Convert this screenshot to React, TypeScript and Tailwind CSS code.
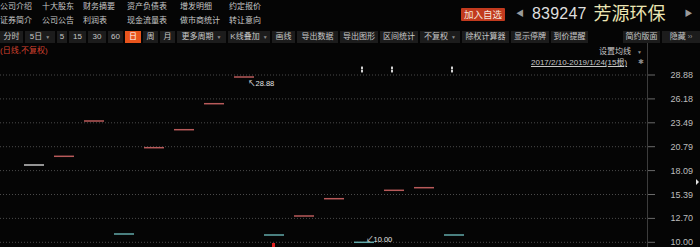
import React from "react";

const FONT = '"Liberation Sans", "Noto Sans CJK SC", sans-serif';

const row1 = ["公司介绍", "十大股东", "财务摘要", "资产负债表", "增发明细", "约定报价"];
const row2 = ["证券简介", "公司公告", "利润表", "现金流量表", "做市商统计", "转让意向"];

type Btn = { t: string; w: string; dd?: boolean; active?: boolean };
const tools: Btn[] = [
  { t: "分时", w: "w-[23px]" },
  { t: "5日", w: "w-[30px]", dd: true },
  { t: "5", w: "w-[10px]" },
  { t: "15", w: "w-[17px]" },
  { t: "30", w: "w-[18px]" },
  { t: "60", w: "w-[15px]" },
  { t: "日", w: "w-[16px]", active: true },
  { t: "周", w: "w-[15px]" },
  { t: "月", w: "w-[15px]" },
  { t: "更多周期", w: "w-[49px]", dd: true },
  { t: "K线叠加", w: "w-[42px]", dd: true },
  { t: "画线", w: "w-[23px]" },
  { t: "导出数据", w: "w-[41px]" },
  { t: "导出图形", w: "w-[38px]" },
  { t: "区间统计", w: "w-[38px]" },
  { t: "不复权", w: "w-[40px]", dd: true },
  { t: "除权计算器", w: "w-[47px]" },
  { t: "显示停牌", w: "w-[38px]" },
  { t: "到价提醒", w: "w-[37px]" },
];

const prices = ["28.88", "26.18", "23.49", "20.79", "18.09", "15.39", "12.70", "10.00"];

const candles: [number, number, string][] = [
  [24, 122, "#c4c4c4"],
  [54, 113.3, "#b85a5a"],
  [84, 78, "#b85a5a"],
  [114, 191, "#62a8a8"],
  [144, 104.7, "#b85a5a"],
  [174, 86.7, "#b85a5a"],
  [204, 60.7, "#b85a5a"],
  [234, 34, "#b85a5a"],
  [264, 192, "#62a8a8"],
  [294, 173, "#b85a5a"],
  [324, 155.7, "#b85a5a"],
  [354, 199.3, "#62a8a8"],
  [384, 147.3, "#b85a5a"],
  [414, 144.7, "#b85a5a"],
  [444, 192, "#62a8a8"],
];

function Chart() {
  return (
    <svg width="700" height="204" viewBox="0 0 700 204" className="absolute inset-0">
      {prices.map((p, i) => {
        const y = 32 + i * 23.9;
        return (
          <g key={p}>
            <line x1="0" y1={y} x2="647" y2={y} stroke="#4a4a4a" strokeWidth="1" strokeDasharray="1 2" />
            <line x1="647" y1={y} x2="655" y2={y} stroke="#6a6a6a" strokeWidth="1" />
            <text x="693" y={y + 3} textAnchor="end" fontSize="9" fill="#bdbdbd" fontFamily={FONT}>
              {p}
            </text>
          </g>
        );
      })}
      <line x1="647.5" y1="0" x2="647.5" y2="204" stroke="#3c3c3c" strokeWidth="1" />
      {candles.map(([x, y, c], i) => (
        <line key={i} x1={x} y1={y} x2={x + 20} y2={y} stroke={c} strokeWidth="1.5" />
      ))}
      {[362, 392, 452].map((x) => (
        <g key={x}>
          <rect x={x - 1} y={24} width="2" height="2" fill="#e8e8e8" />
          <rect x={x - 1} y={27} width="2" height="2" fill="#e8e8e8" />
          <rect x={x - 0.5} y={23} width="1" height="7" fill="#bbbbbb" />
        </g>
      ))}
      <text x="248" y="43" fontSize="7.5" fill="#e6e6e6" fontFamily={FONT}>
        ↖28.88
      </text>
      <text x="366" y="199" fontSize="7.5" fill="#e6e6e6" fontFamily={FONT}>
        ↙10.00
      </text>
      <rect x="272" y="200" width="3" height="4" fill="#e02020" />
      <path d="M696 136 L699 139 L696 142 Z" fill="#e0e0e0" />
    </svg>
  );
}

export default function App() {
  return (
    <div
      className="w-[700px] h-[247px] bg-[#050505] overflow-hidden text-[#c8c8c8]"
      style={{ fontFamily: FONT }}
    >
      {/* header */}
      <div className="flex h-[28px]">
        <div className="flex flex-col text-[8px] leading-[14px] shrink-0">
          <div className="grid grid-cols-[42px_41px_44px_53px_49px_40px]">
            {row1.map((t) => (
              <span key={t} className="whitespace-nowrap">{t}</span>
            ))}
          </div>
          <div className="grid grid-cols-[42px_41px_44px_53px_49px_40px]">
            {row2.map((t) => (
              <span key={t} className="whitespace-nowrap">{t}</span>
            ))}
          </div>
        </div>
        <div className="ml-[192px] flex items-center h-[28px] shrink-0 whitespace-nowrap">
          <div className="w-[44px] h-[13px] bg-[#c23a1e] text-[#f4e4dc] text-[9.5px] leading-[13px] text-center rounded-[1px]">
            加入自选
          </div>
          <span className="ml-[11px] text-[8px] text-[#9a9a9a]">◀</span>
          <span className="ml-[8px] text-[16px] leading-none text-[#dedede] tracking-[0.2px]">839247</span>
          <span className="ml-[7px] text-[18px] leading-none text-[#ece6b4]">芳源环保</span>
          <span className="ml-[19px] text-[8px] text-[#9a9a9a]">▶</span>
        </div>
      </div>
      {/* toolbar */}
      <div className="mt-[3px] flex h-[12px] text-[8px] leading-[12px]">
        <div className="flex gap-[2px]">
          {tools.map((b) => (
            <div
              key={b.t}
              className={`${b.w} flex items-center justify-center whitespace-nowrap ${
                b.active ? "bg-[#e8541c] text-white" : "bg-[#1c1c1c]"
              }`}
            >
              {b.t}
              {b.dd && <span className="ml-[3px] text-[5px] text-[#8a8a8a]">▼</span>}
            </div>
          ))}
        </div>
        <div className="ml-[35px] flex gap-[2px]">
          <div className="w-[37px] bg-[#1c1c1c] text-center whitespace-nowrap">简约版面</div>
          <div className="w-[38px] bg-[#1c1c1c] text-center whitespace-nowrap">
            隐藏<span className="ml-[2px] text-[7px] text-[#9a9a9a]">››</span>
          </div>
        </div>
      </div>
      {/* chart */}
      <div className="relative h-[204px]">
        <Chart />
        <div className="absolute left-0 top-[3px] text-[8px] leading-[9px] text-[#d2412e]">(日线,不复权)</div>
        <div className="absolute left-[599px] top-[4px] text-[8px] leading-[9px] whitespace-nowrap">
          设置均线<span className="ml-[6px] text-[5px] text-[#8a8a8a]">▼</span>
        </div>
        <div className="absolute left-[531px] top-[15px] text-[8px] leading-[9px] whitespace-nowrap underline">
          2017/2/10-2019/1/24(15根)
        </div>
        <div className="absolute left-[638px] top-[14px] text-[7px] text-[#8a8a8a]">✱</div>
      </div>
    </div>
  );
}
